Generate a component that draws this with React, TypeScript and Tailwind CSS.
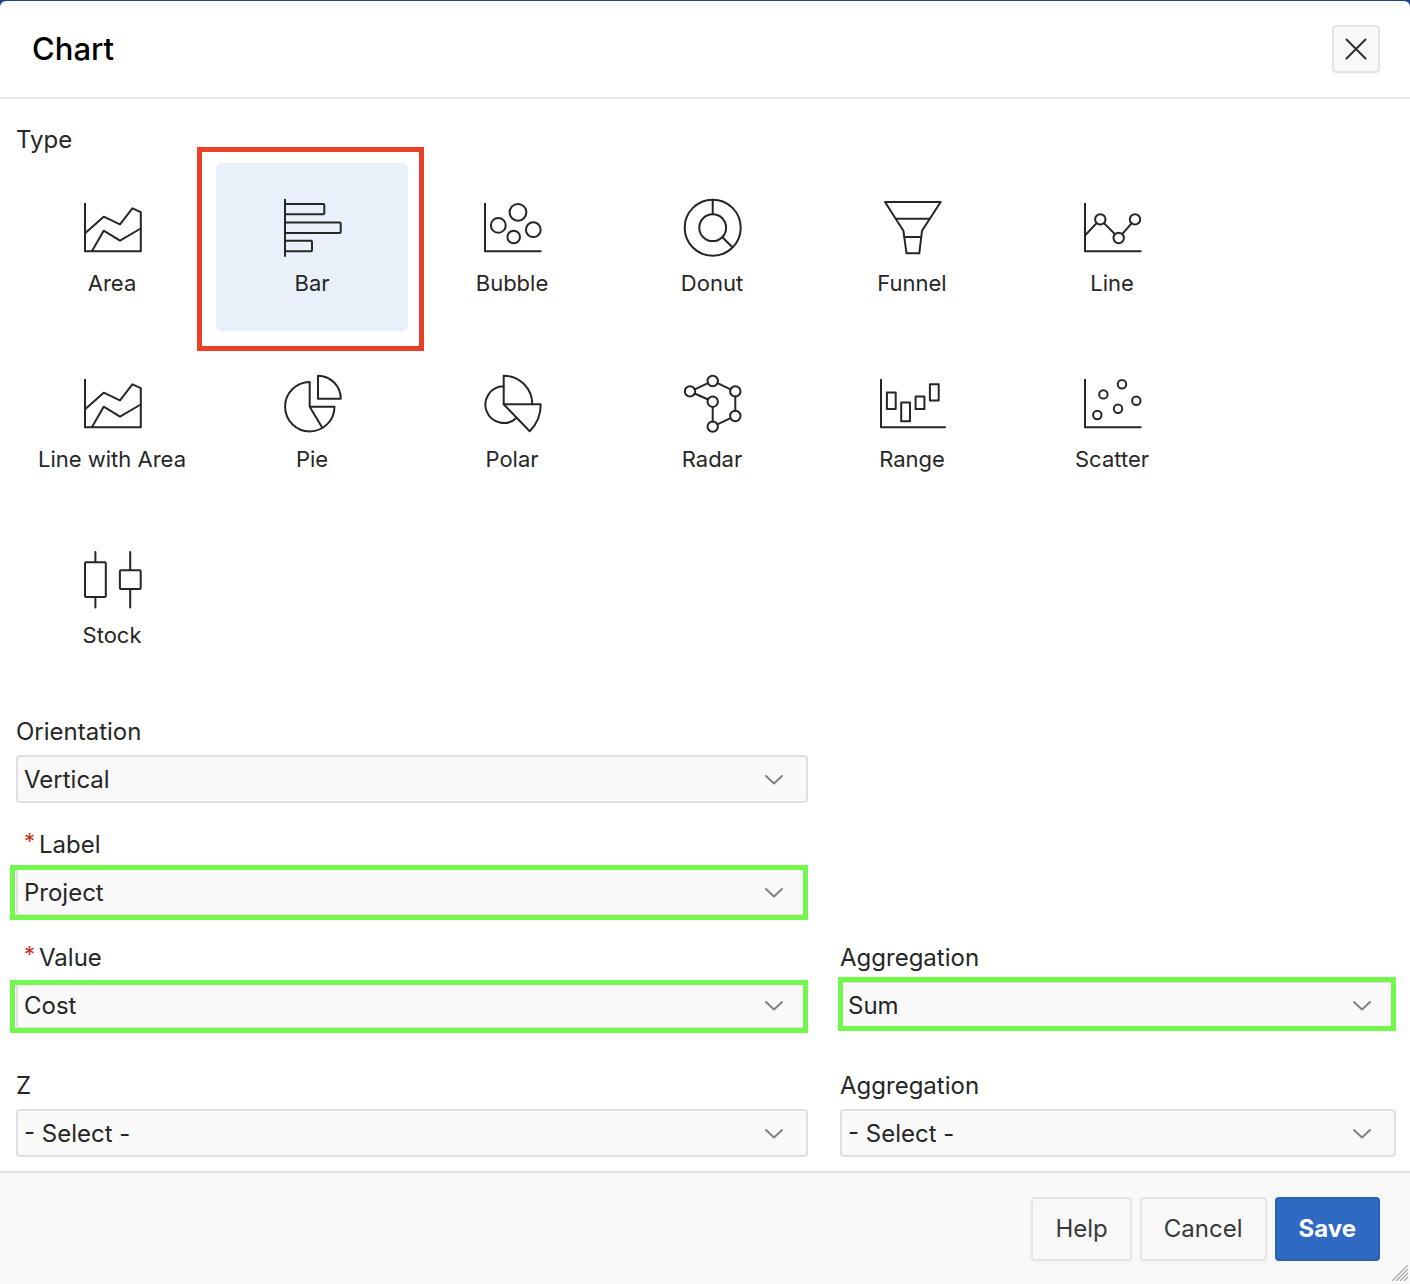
import { useState, type ReactNode } from "react";

const axes = <path d="M5 7.7V55.3H60.7" />;

const area = (
  <>
    <path d="M5 7.7V55.3H60.8V16.2L52.4 12.3 40 28.3 23.7 20.7 5.4 37" />
    <path d="M12 55 23.7 34.7 40 44.7 60.7 32.5" />
  </>
);

const chartTypes: { name: string; icon: ReactNode }[] = [
  { name: "Area", icon: area },
  {
    name: "Bar",
    icon: (
      <>
        <path d="M5 3.7V60" />
        <path d="M5 8H43.3a1 1 0 0 1 1 1V17.3a1 1 0 0 1-1 1H5" />
        <path d="M5 26.4H59.7a1 1 0 0 1 1 1V35.9a1 1 0 0 1-1 1H5" />
        <path d="M5 44.8H31a1 1 0 0 1 1 1V54.3a1 1 0 0 1-1 1H5" />
      </>
    ),
  },
  {
    name: "Bubble",
    icon: (
      <>
        {axes}
        <circle cx="38" cy="16.3" r="8.4" />
        <circle cx="18.3" cy="29.4" r="7.4" />
        <circle cx="33.7" cy="41" r="6.3" />
        <circle cx="53.3" cy="33.7" r="7.4" />
      </>
    ),
  },
  {
    name: "Donut",
    icon: (
      <>
        <circle cx="32.7" cy="31.7" r="28" />
        <circle cx="32.7" cy="31.7" r="13.4" />
        <path d="M32.7 3.7V18.3M42.4 41.2 52.2 51" />
      </>
    ),
  },
  {
    name: "Funnel",
    icon: (
      <>
        <path d="M5 6H60.7L42 34.7 39.3 57.3H26.5L23.4 34.7Z" />
        <path d="M16.3 22.7H49.4M24.4 41H41.2" />
      </>
    ),
  },
  {
    name: "Line",
    icon: (
      <>
        {axes}
        <circle cx="20.3" cy="23.4" r="5.2" />
        <circle cx="38.7" cy="42" r="5.2" />
        <circle cx="55" cy="23.4" r="5.2" />
        <path d="M5.2 39.2 16.6 27.1M24 27.1 35 38.3M42.2 38.2 51.5 27.3" />
      </>
    ),
  },
  { name: "Line with Area", icon: area },
  {
    name: "Pie",
    icon: (
      <>
        <path d="M29.7 34.7V10A24.7 24.7 0 1 0 54.5 34.7H29.7L42.3 55.7" />
        <path d="M38 3.7V26.7H60.8A23 23 0 0 0 38 3.7Z" />
      </>
    ),
  },
  {
    name: "Polar",
    icon: (
      <>
        <path d="M23.7 32.3V3.7A28.6 28.6 0 0 1 52.3 32.3" />
        <path d="M23.7 32.3H60.7A37.5 37.5 0 0 1 49.7 59.2Z" />
        <path d="M23.7 14.2A18.4 18.4 0 1 0 36.4 46" />
      </>
    ),
  },
  {
    name: "Radar",
    icon: (
      <>
        <circle cx="10" cy="19.4" r="5.2" />
        <circle cx="32.7" cy="9" r="5.2" />
        <circle cx="55.3" cy="19.4" r="5.2" />
        <circle cx="55.3" cy="44" r="5.2" />
        <circle cx="32.7" cy="54.6" r="5.2" />
        <circle cx="32.7" cy="29.7" r="5.2" />
        <path d="M14.7 17.3 28 11.2M37.4 11.2 50.6 17.3M55.3 24.6V38.8M50.6 46.2 37.4 52.4M32.7 49.4V34.9M28 27.5 14.7 21.5" />
      </>
    ),
  },
  {
    name: "Range",
    icon: (
      <>
        <path d="M1 7.7V55.3H65" />
        <rect x="6.9" y="20.5" width="8.8" height="16.4" />
        <rect x="21.2" y="30.5" width="8.8" height="18.8" />
        <rect x="35.6" y="24.4" width="8.8" height="12.5" />
        <rect x="49.9" y="12.2" width="8.8" height="16.4" />
      </>
    ),
  },
  {
    name: "Scatter",
    icon: (
      <>
        {axes}
        <circle cx="42" cy="12.3" r="4.2" />
        <circle cx="23.4" cy="22.4" r="4.2" />
        <circle cx="56.3" cy="28.7" r="4.2" />
        <circle cx="38" cy="36.8" r="4.2" />
        <circle cx="17.3" cy="43" r="4.2" />
      </>
    ),
  },
  {
    name: "Stock",
    icon: (
      <>
        <rect x="5" y="14.2" width="20.8" height="34.8" rx="1" />
        <path d="M15.4 4V14M15.4 49V59.6" />
        <rect x="39.9" y="22.2" width="20.8" height="18.9" rx="1" />
        <path d="M50.2 4V22M50.2 41.3V59.6" />
      </>
    ),
  },
];

/** Outline that draws attention to a control without taking part in layout. */
function Callout({ className }: { className: string }) {
  return <span aria-hidden="true" className={`pointer-events-none absolute border-5 ${className}`} />;
}

function TypeTile({
  name,
  icon,
  selected,
  onSelect,
}: {
  name: string;
  icon: ReactNode;
  selected: boolean;
  onSelect: () => void;
}) {
  return (
    <label
      className={`relative flex h-42 w-48 cursor-pointer flex-col items-center rounded-md pt-[33px] ${
        selected ? "bg-[#e8f0fa]" : ""
      }`}
    >
      <input
        type="radio"
        name="chart-type"
        value={name}
        checked={selected}
        onChange={onSelect}
        className="sr-only"
      />
      <svg
        viewBox="0 0 64 64"
        className="size-16 overflow-visible"
        fill="none"
        stroke="#262626"
        strokeWidth="2"
        strokeLinecap="round"
        strokeLinejoin="round"
        aria-hidden="true"
      >
        {icon}
      </svg>
      <span className="mt-[7px] text-[22px] leading-8 whitespace-nowrap">{name}</span>
      {name === "Bar" && <Callout className="-top-4 -right-4 -bottom-5 -left-[19px] border-[#ea4027]" />}
    </label>
  );
}

function SelectField({
  id,
  label,
  value,
  required,
  callout,
}: {
  id: string;
  label: string;
  value: string;
  required?: boolean;
  callout?: string;
}) {
  return (
    <div>
      <label htmlFor={id} className={`flex h-8 text-2xl ${required ? "pl-2" : ""}`}>
        {required && (
          <span aria-hidden="true" className="mr-1 text-[22px] leading-6 text-[#c0301c]">
            *
          </span>
        )}
        {label}
      </label>
      <div className="relative mt-[7px]">
        <select
          id={id}
          required={required}
          defaultValue={value}
          className="block h-12 w-full appearance-none rounded-sm border-2 border-[#dfdfdf] bg-[#f9f9f9] pt-0.5 pr-14 pl-1.5 text-2xl text-[#262626]"
        >
          <option>{value}</option>
        </select>
        <svg
          viewBox="0 0 20 12"
          className="pointer-events-none absolute top-[19px] right-6 h-3 w-5"
          fill="none"
          stroke="#808080"
          strokeWidth="2"
          strokeLinecap="round"
          strokeLinejoin="round"
          aria-hidden="true"
        >
          <path d="M2 2 10 9.5 18 2" />
        </svg>
        {callout && <Callout className={`border-[#72f84c] ${callout}`} />}
      </div>
    </div>
  );
}

const secondaryButton =
  "h-16 rounded-sm border-2 border-[#e4e4e4] bg-[#f8f8f8] px-[22px] text-2xl text-[#393939] shadow-[0_2px_4px_rgba(0,0,0,0.03)]";

export default function App() {
  const [type, setType] = useState("Bar");

  return (
    <div className="min-h-screen bg-[#1f4788] pt-px font-['Inter','Liberation_Sans',sans-serif] text-[#262626]">
      <div
        role="dialog"
        aria-labelledby="dialog-title"
        className="relative flex min-h-[calc(100vh-1px)] flex-col overflow-hidden rounded-t-md bg-white"
      >
        <header className="flex items-center justify-between border-b-2 border-[#e4e4e4] px-8 pt-6 pr-[30px] pb-6">
          <h1 id="dialog-title" className="text-[31px] leading-12 font-medium text-black">
            Chart
          </h1>
          <button
            type="button"
            aria-label="Close"
            className="flex size-12 items-center justify-center rounded-sm border-2 border-[#e4e4e4] bg-[#f8f8f8] shadow-[0_2px_4px_rgba(0,0,0,0.03)]"
          >
            <svg viewBox="0 0 22 22" className="size-[22px]" stroke="#303030" strokeWidth="2" strokeLinecap="round" aria-hidden="true">
              <path d="M1.5 1.5 20.5 20.5M20.5 1.5 1.5 20.5" />
            </svg>
          </button>
        </header>

        <main className="flex-1 pt-[25px] pr-[14px] pb-[14px] pl-4">
          <fieldset>
            <legend className="text-2xl">Type</legend>
            <div className="mt-[7px] flex max-w-[1200px] flex-wrap gap-2">
              {chartTypes.map((t) => (
                <TypeTile
                  key={t.name}
                  name={t.name}
                  icon={t.icon}
                  selected={type === t.name}
                  onSelect={() => setType(t.name)}
                />
              ))}
            </div>
          </fieldset>

          <div className="mt-[33px] grid grid-cols-[792fr_556fr] gap-x-8">
            <div className="mb-[26px]">
              <SelectField id="orientation" label="Orientation" value="Vertical" />
            </div>
            <div className="col-start-1 mb-[26px]">
              <SelectField
                id="label"
                label="Label"
                value="Project"
                required
                callout="-top-[3px] right-0 -bottom-1 -left-1.5"
              />
            </div>
            <div className="col-start-1 mb-[41px]">
              <SelectField
                id="value"
                label="Value"
                value="Cost"
                required
                callout="-top-px right-0 -bottom-1 -left-1.5"
              />
            </div>
            <SelectField
              id="aggregation"
              label="Aggregation"
              value="Sum"
              callout="-top-1 right-0 -bottom-0.5 -left-0.5"
            />
            <SelectField id="z" label="Z" value="- Select -" />
            <SelectField id="z-aggregation" label="Aggregation" value="- Select -" />
          </div>
        </main>

        <footer className="flex justify-end gap-2 border-t-2 border-[#dfdfdf] bg-[#f9f9f9] pt-6 pr-[30px] pb-[23px]">
          <button type="button" className={secondaryButton}>
            Help
          </button>
          <button type="button" className={secondaryButton}>
            Cancel
          </button>
          <button
            type="button"
            className="h-16 rounded-sm border-2 border-[#2a5fb4] bg-[#2f69c2] px-[22px] text-2xl font-bold text-white shadow-[0_2px_4px_rgba(0,0,0,0.03)]"
          >
            Save
          </button>
        </footer>

        <svg
          viewBox="0 0 16 16"
          className="absolute right-0.5 bottom-[3px] size-4"
          stroke="#a3a3a3"
          strokeWidth="1.2"
          aria-hidden="true"
        >
          <path d="M0 16 16 0M4 16 16 4M8 16 16 8M12 16 16 12" />
        </svg>
      </div>
    </div>
  );
}
